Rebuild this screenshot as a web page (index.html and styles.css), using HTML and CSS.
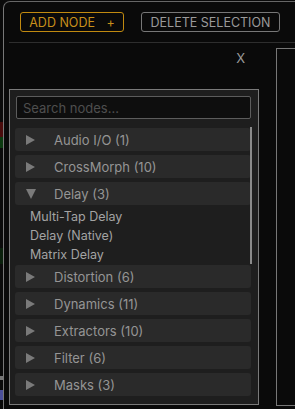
FILE: index.html
```html
<!DOCTYPE html>
<html lang="en">
<head>
    <meta charset="UTF-8">
    <meta name="viewport" content="width=device-width, initial-scale=1.0">
    <title>Node Editor</title>
    <link rel="stylesheet" href="styles.css">
</head>
<body>
    <div class="gutter">
        <div class="mark mark-red"></div>
        <div class="mark mark-green"></div>
        <div class="mark mark-green-dim"></div>
        <div class="mark mark-text"></div>
        <div class="mark mark-blue"></div>
    </div>

    <div class="window">
        <div class="toolbar">
            <button class="btn btn-add">ADD NODE <span class="plus">+</span></button>
            <button class="btn btn-delete">DELETE SELECTION</button>
        </div>
        <div class="toolbar-line"></div>

        <div class="workspace">
            <div class="sidebar">
                <div class="close-row"><span class="close">X</span></div>

                <div class="node-panel">
                    <input class="search" type="text" placeholder="Search nodes...">

                    <div class="list-wrap">
                        <div class="list">
                            <div class="category"><span class="arrow right"></span>Audio I/O (1)</div>
                            <div class="category"><span class="arrow right"></span>CrossMorph (10)</div>
                            <div class="category open"><span class="arrow down"></span>Delay (3)</div>
                            <div class="items">
                                <div class="item">Multi-Tap Delay</div>
                                <div class="item">Delay (Native)</div>
                                <div class="item">Matrix Delay</div>
                            </div>
                            <div class="category"><span class="arrow right"></span>Distortion (6)</div>
                            <div class="category"><span class="arrow right"></span>Dynamics (11)</div>
                            <div class="category"><span class="arrow right"></span>Extractors (10)</div>
                            <div class="category"><span class="arrow right"></span>Filter (6)</div>
                            <div class="category"><span class="arrow right"></span>Masks (3)</div>
                        </div>
                        <div class="scrollbar"><div class="thumb"></div></div>
                    </div>
                </div>
            </div>

            <div class="canvas"></div>
        </div>
    </div>
</body>
</html>
```

FILE: styles.css
```css
body {
    margin: 0;
    height: 409px;
    overflow: hidden;
    background-color: #0a0a0a;
    font-family: Inter, "Noto Sans", sans-serif;
    display: flex;
}

/* bits of the page behind the window */
.gutter {
    width: 3px;
    flex-shrink: 0;
}

.mark {
    width: 3px;
}

.mark-red {
    margin-top: 122px;
    height: 15px;
    background-color: #4a0c0c;
}

.mark-green {
    height: 11px;
    background-color: #0c3a10;
}

.mark-green-dim {
    margin-top: 100px;
    height: 16px;
    background-color: #0a200c;
}

.mark-text {
    margin-top: 112px;
    height: 4px;
    background-color: #777;
}

.mark-blue {
    margin-top: 10px;
    height: 10px;
    background-color: #4b4f9a;
}

.window {
    flex: 1;
    margin-top: 1px;
    border-top: 1px solid #666;
    border-left: 1px solid #777;
    border-top-left-radius: 7px;
    background-color: #0a0a0a;
}

.toolbar {
    display: flex;
    gap: 17px;
    padding: 10px 0 10px 16px;
}

.btn {
    height: 20px;
    padding: 0;
    background: transparent;
    border-radius: 3px;
    font-family: Inter, "Noto Sans", sans-serif;
    font-size: 12.5px;
    cursor: pointer;
}

.btn-add {
    width: 104px;
    border: 1px solid #c18a10;
    color: #c8901a;
}

.btn-add .plus {
    margin-left: 8px;
}

.btn-delete {
    width: 139px;
    border: 1px solid #777;
    color: #9a9a9a;
}

.toolbar-line {
    height: 1px;
    margin-left: 5px;
    background-color: #2e2e2e;
}

.workspace {
    display: flex;
    gap: 17px;
    padding-left: 5px;
}

.sidebar {
    width: 250px;
}

.close-row {
    height: 46px;
    display: flex;
    justify-content: flex-end;
    padding-right: 14px;
    box-sizing: border-box;
}

.close {
    margin-top: 8px;
    font-size: 13px;
    line-height: 14px;
    color: #9a9a9a;
}

.node-panel {
    height: 316px;
    box-sizing: border-box;
    border: 1px solid #7a7a7a;
    background-color: #1e1e1e;
    padding: 6px 5px 0 5px;
}

.search {
    display: block;
    width: 235px;
    height: 23px;
    margin-left: 1px;
    box-sizing: border-box;
    border: 1px solid #5c5c5c;
    border-radius: 2px;
    background-color: #0e0e0e;
    padding: 0 6px;
    font-family: Inter, "Noto Sans", sans-serif;
    font-size: 13px;
    color: #ccc;
    outline: none;
}

.search::placeholder {
    color: #4e4e4e;
}

.list-wrap {
    display: flex;
    margin-top: 8px;
}

.list {
    width: 236px;
    padding-top: 1px;
}

.category {
    height: 23px;
    margin-bottom: 4px;
    display: flex;
    align-items: center;
    background-color: #2a2a2a;
    border-radius: 3px;
    font-size: 13px;
    color: #959595;
}

.category.open {
    margin-bottom: 0;
}

.arrow {
    width: 0;
    height: 0;
    margin-left: 11px;
    margin-right: 19px;
}

.arrow.right {
    border-top: 5px solid transparent;
    border-bottom: 5px solid transparent;
    border-left: 9px solid #7a7a7a;
}

.arrow.down {
    border-left: 5px solid transparent;
    border-right: 5px solid transparent;
    border-top: 10px solid #7a7a7a;
    margin-right: 18px;
}

.items {
    padding: 2px 0 1px 15px;
}

.item {
    height: 19px;
    line-height: 19px;
    font-size: 12.5px;
    color: #a3a3a3;
}

.scrollbar {
    width: 2px;
    margin-left: -1px;
}

.thumb {
    height: 137px;
    background-color: #8a8a8a;
}

.canvas {
    flex: 1;
    margin-top: 5px;
    height: 356px;
    border-top: 1px solid #777;
    border-left: 1px solid #777;
    border-bottom: 1px solid #777;
}
```
